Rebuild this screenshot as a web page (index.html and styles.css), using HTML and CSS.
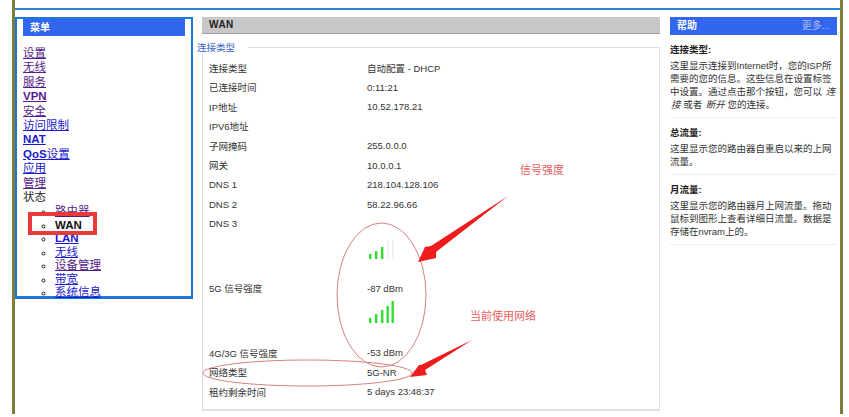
FILE: index.html
```html
<!DOCTYPE html>
<html lang="zh-CN">
<head>
  <meta charset="UTF-8">
  <title>WAN</title>
  <link rel="stylesheet" href="styles.css">
</head>
<body>
  <div class="page">
    <div class="topbar"></div>
    <div class="columns">
      <!-- Menu -->
      <div class="menu">
        <h2 class="menu-title">菜单</h2>
        <ul class="nav">
          <li><a class="seen" href="#">设置</a></li>
          <li><a class="seen" href="#">无线</a></li>
          <li><a class="seen" href="#">服务</a></li>
          <li><a class="seen strong" href="#">VPN</a></li>
          <li><a class="seen" href="#">安全</a></li>
          <li><a href="#">访问限制</a></li>
          <li><a class="strong" href="#">NAT</a></li>
          <li><a href="#"><b>QoS</b>设置</a></li>
          <li><a href="#">应用</a></li>
          <li><a class="seen" href="#">管理</a></li>
          <li>状态
            <ul class="subnav">
              <li><a class="seen" href="#">路由器</a></li>
              <li class="current">WAN</li>
              <li><a class="strong" href="#">LAN</a></li>
              <li><a href="#">无线</a></li>
              <li><a class="seen" href="#">设备管理</a></li>
              <li><a href="#">带宽</a></li>
              <li><a href="#">系统信息</a></li>
            </ul>
          </li>
        </ul>
      </div>

      <!-- Main -->
      <div class="main">
        <h2 class="main-title">WAN</h2>
        <fieldset class="info">
          <legend>连接类型</legend>
          <div class="row"><span class="label">连接类型</span><span>自动配置 - DHCP</span></div>
          <div class="row"><span class="label">已连接时间</span><span>0:11:21</span></div>
          <div class="row"><span class="label">IP地址</span><span>10.52.178.21</span></div>
          <div class="row"><span class="label">IPV6地址</span><span></span></div>
          <div class="row"><span class="label">子网掩码</span><span>255.0.0.0</span></div>
          <div class="row"><span class="label">网关</span><span>10.0.0.1</span></div>
          <div class="row"><span class="label">DNS 1</span><span>218.104.128.106</span></div>
          <div class="row"><span class="label">DNS 2</span><span>58.22.96.66</span></div>
          <div class="row"><span class="label">DNS 3</span><span></span></div>
          <div class="bars-row">
            <svg class="bars" width="28" height="22" viewBox="0 0 28 22">
              <rect class="on" x="2" y="17" width="2.4" height="5"/>
              <rect class="on" x="8" y="14" width="2.4" height="8"/>
              <rect class="on" x="14" y="10" width="2.4" height="12"/>
              <rect class="off" x="20" y="4" width="1.6" height="18"/>
              <rect class="off" x="25" y="2" width="1.6" height="20"/>
            </svg>
          </div>
          <div class="row"><span class="label">5G 信号强度</span><span>-87 dBm</span></div>
          <div class="bars-row">
            <svg class="bars" width="28" height="22" viewBox="0 0 28 22">
              <rect class="on" x="2" y="17" width="2.4" height="5"/>
              <rect class="on" x="8" y="13" width="2.4" height="9"/>
              <rect class="on" x="14" y="9" width="2.4" height="13"/>
              <rect class="on" x="19.5" y="5" width="2.4" height="17"/>
              <rect class="on" x="24.5" y="0" width="2.4" height="22"/>
            </svg>
          </div>
          <div class="row"><span class="label">4G/3G 信号强度</span><span>-53 dBm</span></div>
          <div class="row"><span class="label">网络类型</span><span>5G-NR</span></div>
          <div class="row"><span class="label">租约剩余时间</span><span>5 days 23:48:37</span></div>
        </fieldset>
      </div>

      <!-- Help -->
      <div class="help">
        <div class="help-title"><span>帮助</span><a href="#">更多...</a></div>
        <div class="help-item">
          <h3>连接类型:</h3>
          <p>这里显示连接到Internet时，您的ISP所需要的您的信息。这些信息在设置标签中设置。通过点击那个按钮，您可以 <i>连</i><i>接</i> 或者 <i>断开</i> 您的连接。</p>
        </div>
        <div class="help-item">
          <h3>总流量:</h3>
          <p>这里显示您的路由器自重启以来的上网流量。</p>
        </div>
        <div class="help-item">
          <h3>月流量:</h3>
          <p>这里显示您的路由器月上网流量。拖动鼠标到图形上查看详细日流量。数据是存储在nvram上的。</p>
        </div>
      </div>
    </div>
  </div>

  <!-- Hand drawn notes on top of the screenshot -->
  <svg class="marks" width="849" height="417" viewBox="0 0 849 417">
    <rect class="mark-box" x="30" y="214" width="65" height="19"/>
    <ellipse class="mark-ring" cx="381.5" cy="295" rx="44.5" ry="72"/>
    <ellipse class="mark-ring" cx="307.5" cy="373" rx="104.5" ry="13"/>
    <polygon class="mark-arrow" points="508,196 431,246 425,247 418,262 436,258 436,252"/>
    <polygon class="mark-arrow" points="472,340 421,365 419,365 410,377 427,375 425,370"/>
  </svg>
  <div class="note note-signal">信号强度</div>
  <div class="note note-network">当前使用网络</div>
</body>
</html>
```

FILE: styles.css
```css
body {
  margin: 0;
  background: #fff;
  color: #333;
  font-family: "Liberation Sans", "Noto Sans CJK SC", sans-serif;
  font-size: 9.5px;
}

.page {
  box-sizing: border-box;
  width: 831px;
  height: 414px;
  margin-left: 12px;
  border-left: 3px solid #7d7d3c;
  border-right: 3px solid #7d7d3c;
}

.topbar {
  height: 8px;
  border-bottom: 2px solid #2a86d4;
}

.columns {
  display: flex;
  padding-top: 7px;
}

/* Menu */
.menu {
  box-sizing: border-box;
  flex: none;
  width: 178px;
  height: 282px;
  margin-right: 9px;
  padding: 0 6px;
  border: 2px solid #1e78dc;
  border-width: 2px 2px 3px 2px;
}

.menu-title {
  margin: 0 0 10px;
  padding: 0 7px;
  height: 17px;
  line-height: 17px;
  background: #3366ee;
  color: #fff;
  font-size: 10px;
}

.nav {
  margin: 0;
  padding: 0;
  list-style: none;
  font-size: 11.5px;
  line-height: 14.4px;
  color: #222;
}

.nav a {
  color: #1a1acc;
}

.nav a.seen {
  color: #551a8b;
}

.nav a.strong,
.nav b {
  font-weight: bold;
}

.subnav {
  margin: 0;
  padding: 1px 0 0 32px;
  list-style: circle;
  line-height: 13.5px;
}

.subnav .current {
  font-weight: bold;
  color: #111;
}

/* Main */
.main {
  flex: none;
  width: 458px;
  margin-right: 10px;
}

.main-title {
  box-sizing: border-box;
  margin: 0;
  height: 17px;
  padding-left: 7px;
  line-height: 16px;
  background: #c8c8c8;
  border-bottom: 1px solid #a0a0a0;
  color: #222;
  font-size: 10px;
  letter-spacing: 0.5px;
}

.info {
  box-sizing: border-box;
  height: 370px;
  margin: 7px 0 0;
  padding: 4px 0 0 6px;
  border: 1px solid #dedede;
  border-width: 1px 1px 2px 1px;
  min-width: 0;
}

.info legend {
  margin-left: -12px;
  padding: 0 13px 0 0;
  color: #3a62c4;
  font-size: 9.5px;
  line-height: 13px;
}

.row {
  display: flex;
  height: 19.5px;
  align-items: center;
}

.label {
  flex: none;
  width: 158px;
}

.bars-row {
  height: 45px;
  box-sizing: border-box;
  padding: 3px 0 0 158px;
}

.bars {
  display: block;
}

.bars .on {
  fill: #33dd33;
}

.bars .off {
  fill: #eeeeee;
}

/* Help */
.help {
  flex: none;
  width: 167px;
}

.help-title {
  display: flex;
  justify-content: space-between;
  height: 18px;
  padding: 0 7px;
  line-height: 17px;
  background: #3366ee;
  color: #fff;
  font-size: 10px;
  font-weight: bold;
}

.help-title a {
  color: #a9bdf5;
  font-weight: normal;
  text-decoration: none;
}

.help-item {
  padding: 8px 0 6px;
  border-bottom: 1px solid #eee;
}

.help-item h3 {
  margin: 0 0 2px;
  color: #222;
  font-size: 9.5px;
  line-height: 14px;
}

.help-item p {
  margin: 0;
  line-height: 13px;
}

.help-item i {
  padding-left: 1px;
}

/* Notes */
.marks {
  position: absolute;
  top: 0;
  left: 0;
  pointer-events: none;
}

.mark-box {
  fill: none;
  stroke: #e83a3a;
  stroke-width: 4;
}

.mark-ring {
  fill: none;
  stroke: #d98080;
  stroke-width: 1;
}

.mark-arrow {
  fill: #ee1c1c;
}

.note {
  position: absolute;
  color: #e86060;
  font-size: 11px;
  line-height: 14px;
}

.note-signal {
  top: 163px;
  left: 520px;
}

.note-network {
  top: 309px;
  left: 470px;
}
```
